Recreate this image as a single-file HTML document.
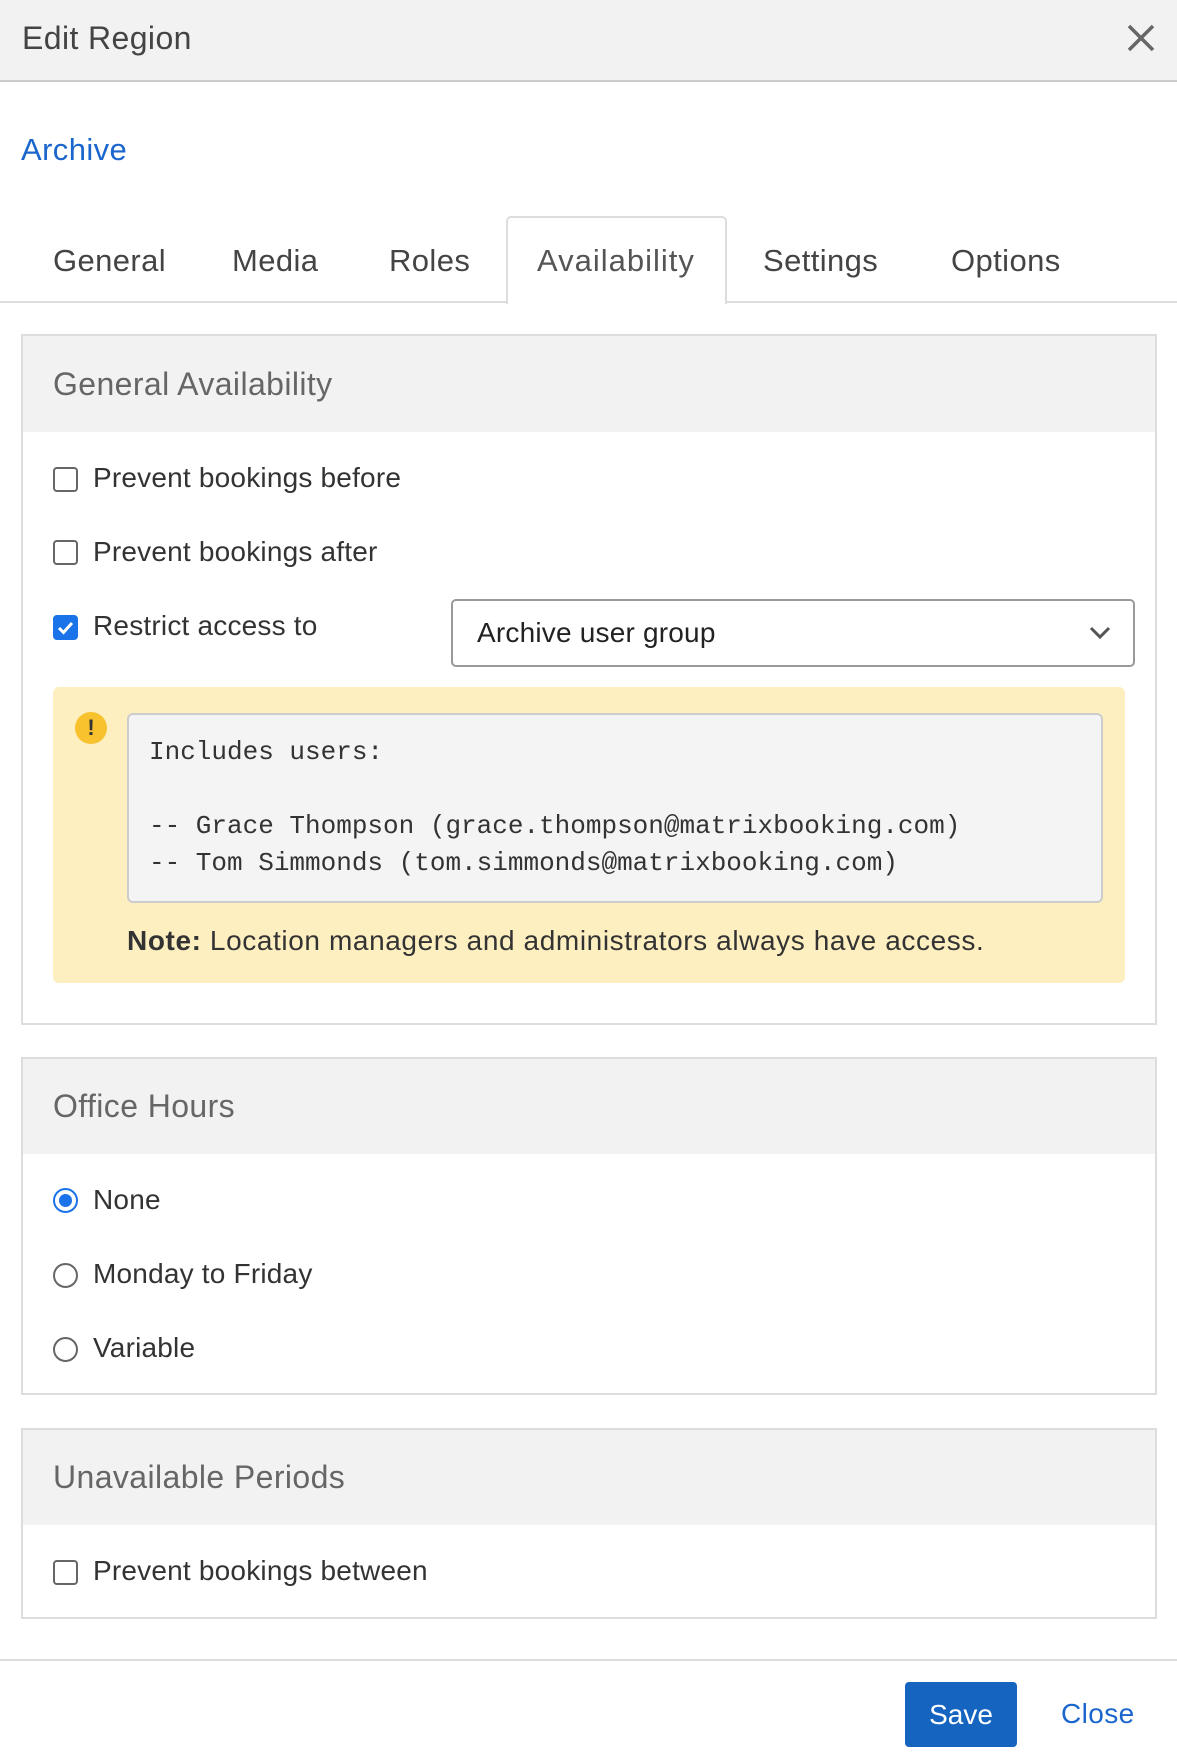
<!DOCTYPE html>
<html><head><meta charset="utf-8"><style>
*{box-sizing:border-box;margin:0;padding:0}
body{width:1177px;height:1763px;background:#fff;font-family:"Liberation Sans",sans-serif;color:#333;position:relative;overflow:hidden}
.a{position:absolute;white-space:nowrap}
.hdr{left:0;top:0;width:1177px;height:82px;background:#f2f2f2;border-bottom:2px solid #ccc}
.t{font-size:31px;line-height:36px;transform:translateY(-50%);letter-spacing:0.4px}
.panel{position:absolute;left:21px;width:1136px;border:2px solid #ddd;background:#fff}
.ph{background:#f2f2f2;position:absolute;left:0;top:0;right:0}
.cb{position:absolute;width:25px;height:25px;border:2px solid #666;border-radius:4px;background:#fff}
.rd{position:absolute;width:25px;height:25px;border:2px solid #666;border-radius:50%;background:#fff}
.t.lbl{font-size:28px;color:#333;letter-spacing:0.2px}
</style></head><body>
<div class="a hdr"></div>
<div class="a t" style="left:22px;top:38px;font-size:32px;color:#444">Edit Region</div>
<svg class="a" style="left:1125px;top:22px" width="32" height="32" viewBox="0 0 32 32"><path d="M4 4L28 28M28 4L4 28" stroke="#666" stroke-width="3.5"/></svg>
<div class="a t" style="left:21px;top:150px;color:#1a66cc">Archive</div>
<div class="a" style="left:0;top:301px;width:1177px;height:2px;background:#ddd"></div>
<div class="a" style="left:506px;top:216px;width:221px;height:88px;border:2px solid #ddd;border-bottom:none;border-radius:5px 5px 0 0;background:#fff"></div>
<div class="a t" style="left:53px;top:261px;color:#444">General</div>
<div class="a t" style="left:232px;top:261px;color:#444">Media</div>
<div class="a t" style="left:389px;top:261px;color:#444">Roles</div>
<div class="a t" style="left:537px;top:261px;color:#555;letter-spacing:1px">Availability</div>
<div class="a t" style="left:763px;top:261px;color:#444">Settings</div>
<div class="a t" style="left:951px;top:261px;color:#444">Options</div>

<div class="panel" style="top:334px;height:691px"><div class="ph" style="height:96px"></div></div>
<div class="a t" style="left:53px;top:384px;color:#666;font-size:32px">General Availability</div>
<div class="cb" style="left:53px;top:467px"></div><div class="a t lbl" style="left:93px;top:478px">Prevent bookings before</div>
<div class="cb" style="left:53px;top:540px"></div><div class="a t lbl" style="left:93px;top:552px">Prevent bookings after</div>
<div class="cb" style="left:53px;top:615px;background:#1a73e8;border-color:#1a73e8"><svg width="21" height="21" viewBox="0 0 21 21" style="position:absolute;left:0;top:0"><path d="M4 11l4.5 4.5L17 6" stroke="#fff" stroke-width="3" fill="none"/></svg></div>
<div class="a t lbl" style="left:93px;top:626px">Restrict access to</div>
<div class="a" style="left:451px;top:599px;width:684px;height:68px;border:2px solid #999;border-radius:5px;background:#fff"></div>
<div class="a t lbl" style="left:477px;top:633px;color:#222">Archive user group</div>
<svg class="a" style="left:1088px;top:624px" width="24" height="18" viewBox="0 0 24 18"><path d="M3 4l9 9 9-9" stroke="#555" stroke-width="3" fill="none"/></svg>
<div class="a" style="left:53px;top:687px;width:1072px;height:296px;background:#fdefc0;border-radius:6px"></div>
<div class="a" style="left:75px;top:712px;width:32px;height:32px;border-radius:50%;background:#f8c12e;color:#333;font-weight:bold;font-size:22px;text-align:center;line-height:32px">!</div>
<div class="a" style="left:127px;top:713px;width:976px;height:190px;background:#f4f4f4;border:2px solid #ccc;border-radius:6px"></div>
<div class="a" style="left:149px;top:734px;font-family:'Liberation Mono',monospace;font-size:26px;line-height:37px;color:#333">Includes users:<br><br>-- Grace Thompson (grace.thompson@matrixbooking.com)<br>-- Tom Simmonds (tom.simmonds@matrixbooking.com)</div>
<div class="a t lbl" style="left:127px;top:941px;letter-spacing:0.6px"><b>Note:</b> Location managers and administrators always have access.</div>

<div class="panel" style="top:1057px;height:338px"><div class="ph" style="height:95px"></div></div>
<div class="a t" style="left:53px;top:1106px;color:#666;font-size:32px">Office Hours</div>
<div class="rd" style="left:53px;top:1188px;border-color:#1a73e8"><div style="position:absolute;left:4px;top:4px;width:13px;height:13px;border-radius:50%;background:#1a73e8"></div></div>
<div class="a t lbl" style="left:93px;top:1200px">None</div>
<div class="rd" style="left:53px;top:1263px"></div><div class="a t lbl" style="left:93px;top:1274px">Monday to Friday</div>
<div class="rd" style="left:53px;top:1337px"></div><div class="a t lbl" style="left:93px;top:1348px">Variable</div>

<div class="panel" style="top:1428px;height:191px"><div class="ph" style="height:95px"></div></div>
<div class="a t" style="left:53px;top:1477px;color:#666;font-size:32px">Unavailable Periods</div>
<div class="cb" style="left:53px;top:1560px"></div><div class="a t lbl" style="left:93px;top:1571px">Prevent bookings between</div>

<div class="a" style="left:0;top:1659px;width:1177px;height:2px;background:#ddd"></div>
<div class="a" style="left:905px;top:1682px;width:112px;height:65px;background:#1565c0;border-radius:4px;color:#fff;font-size:28px;line-height:65px;text-align:center">Save</div>
<div class="a t" style="left:1061px;top:1714px;color:#1a66cc;font-size:28px">Close</div>
</body></html>
